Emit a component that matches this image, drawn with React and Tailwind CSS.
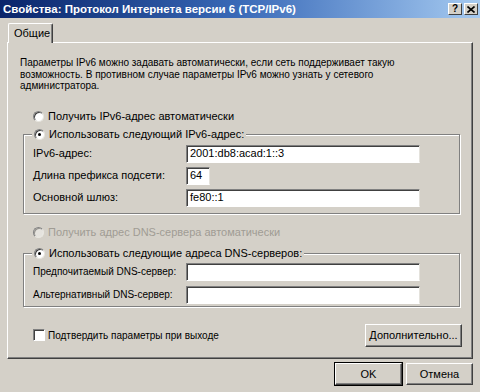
import React from 'react';

const FONT = { fontFamily: '"Liberation Sans", Arial, sans-serif' };

function Radio({ checked, disabled }) {
  return (
    <span className="relative inline-block w-[11px] h-[11px] rounded-full bg-white border border-t-[#808080] border-l-[#808080] border-b-[#e8e6e0] border-r-[#e8e6e0] shadow-[inset_1px_1px_0_#404040] shrink-0">
      {checked && (
        <span className="absolute left-[3px] top-[3px] w-[3px] h-[3px] rounded-full bg-black" />
      )}
      {disabled && <span className="absolute inset-0 rounded-full bg-[#d4d0c8]/60" />}
    </span>
  );
}

function Field({ value = '', className = 'w-[234px]' }) {
  return (
    <div
      className={`${className} h-[18px] bg-white border border-t-[#808080] border-l-[#808080] border-b-white border-r-[#e4e2dc] shadow-[inset_1px_1px_0_#404040] px-[3px] text-[11px] leading-[15px] text-black`}
    >
      {value}
    </div>
  );
}

function Row({ label, value, fieldClass, labelClass = '' }) {
  return (
    <div className="flex items-center h-[18px]">
      <span className={`w-[153px] shrink-0 whitespace-nowrap ${labelClass}`}>{label}</span>
      <Field value={value} className={fieldClass} />
    </div>
  );
}

function Button({ children, isDefault, className = '' }) {
  return (
    <div
      className={`${className} flex items-center justify-center bg-[#d4d0c8] border border-t-white border-l-white border-b-[#404040] border-r-[#404040] shadow-[inset_-1px_-1px_0_#808080] ${
        isDefault ? 'outline outline-1 outline-black' : ''
      }`}
    >
      {children}
    </div>
  );
}

function GroupBox({ legend, children, className = '' }) {
  return (
    <fieldset
      className={`${className} border border-[#808080] shadow-[1px_1px_0_#fff,inset_1px_1px_0_#fff] ml-[15px] w-[437px]`}
    >
      <legend className="ml-[8px] px-[2px] bg-[#d4d0c8] flex items-center gap-[4px] h-[13px]">
        <Radio checked />
        <span>{legend}</span>
      </legend>
      {children}
    </fieldset>
  );
}

export default function App() {
  return (
    <div
      className="w-[480px] h-[392px] bg-[#d4d0c8] text-[11px] leading-[13px] text-black overflow-hidden"
      style={FONT}
    >
      {/* title bar */}
      <div className="h-[18px] flex items-center justify-between pl-[3px] pr-[2px] bg-gradient-to-r from-[#0a246a] via-[#3a6ab8] to-[#a6caf0]">
        <span className="text-white font-bold text-[11.5px]">
          Свойства: Протокол Интернета версии 6 (TCP/IPv6)
        </span>
        <div className="flex gap-[2px]">
          <div className="w-[14px] h-[12px] flex items-center justify-center bg-[#d4d0c8] border border-t-white border-l-white border-b-[#404040] border-r-[#404040] text-[10px] font-bold leading-none">
            ?
          </div>
          <div className="w-[14px] h-[12px] flex items-center justify-center bg-[#d4d0c8] border border-t-white border-l-white border-b-[#404040] border-r-[#404040]">
            <svg width="8" height="7" viewBox="0 0 8 7">
              <path d="M0.5 0.5 L7.5 6.5 M7.5 0.5 L0.5 6.5" stroke="#000" strokeWidth="1.6" />
            </svg>
          </div>
        </div>
      </div>

      {/* tab */}
      <div className="pl-[8px] pt-[5px] relative z-10 h-[25px]">
        <div className="w-[45px] h-[20px] bg-[#d4d0c8] border-t border-l border-white border-r border-r-[#404040] rounded-t-[2px] shadow-[inset_-1px_0_0_#808080] flex items-center pl-[5px]">
          Общие
        </div>
      </div>

      {/* panel */}
      <div className="ml-[7px] mt-[-1px] w-[466px] h-[317px] border border-t-white border-l-white border-b-[#404040] border-r-[#404040] shadow-[inset_-1px_-1px_0_#808080] pt-[14px]">
        <p className="pl-[12px] pr-[20px] text-[10px] leading-[11.5px]">
          Параметры IPv6 можно задавать автоматически, если сеть поддерживает такую
          возможность. В противном случае параметры IPv6 можно узнать у сетевого
          администратора.
        </p>

        <div className="flex items-center gap-[4px] pl-[25px] mt-[18px] h-[13px]">
          <Radio />
          <span>Получить IPv6-адрес автоматически</span>
        </div>

        <GroupBox legend="Использовать следующий IPv6-адрес:" className="mt-[5px] h-[86px]">
          <div className="pl-[9px] pt-[4px] flex flex-col gap-[4px]">
            <Row label="IPv6-адрес:" value="2001:db8:acad:1::3" />
            <Row label="Длина префикса подсети:" value="64" fieldClass="w-[24px]" />
            <Row label="Основной шлюз:" value="fe80::1" />
          </div>
        </GroupBox>

        <div className="flex items-center gap-[4px] pl-[25px] mt-[12px] h-[13px] text-[#a09c94]">
          <Radio disabled />
          <span>Получить адрес DNS-сервера автоматически</span>
        </div>

        <GroupBox legend="Использовать следующие адреса DNS-серверов:" className="mt-[8px] h-[60px]">
          <div className="pl-[9px] pt-[3px] flex flex-col gap-[5px]">
            <Row label="Предпочитаемый DNS-сервер:" labelClass="text-[10px]" />
            <Row label="Альтернативный DNS-сервер:" labelClass="text-[10px]" />
          </div>
        </GroupBox>

        <div className="flex items-center justify-between mt-[17px] pl-[25px] pr-[10px]">
          <div className="flex items-center gap-[3px]">
            <span className="w-[12px] h-[12px] bg-white border border-t-[#808080] border-l-[#808080] border-b-white border-r-white shadow-[inset_1px_1px_0_#404040]" />
            <span className="text-[10px]">Подтвердить параметры при выходе</span>
          </div>
          <Button className="w-[97px] h-[23px]">Дополнительно...</Button>
        </div>
      </div>

      <div className="flex justify-end gap-[4px] pr-[7px] mt-[4px]">
        <Button isDefault className="w-[67px] h-[22px]">
          OK
        </Button>
        <Button className="w-[67px] h-[22px]">Отмена</Button>
      </div>
    </div>
  );
}
